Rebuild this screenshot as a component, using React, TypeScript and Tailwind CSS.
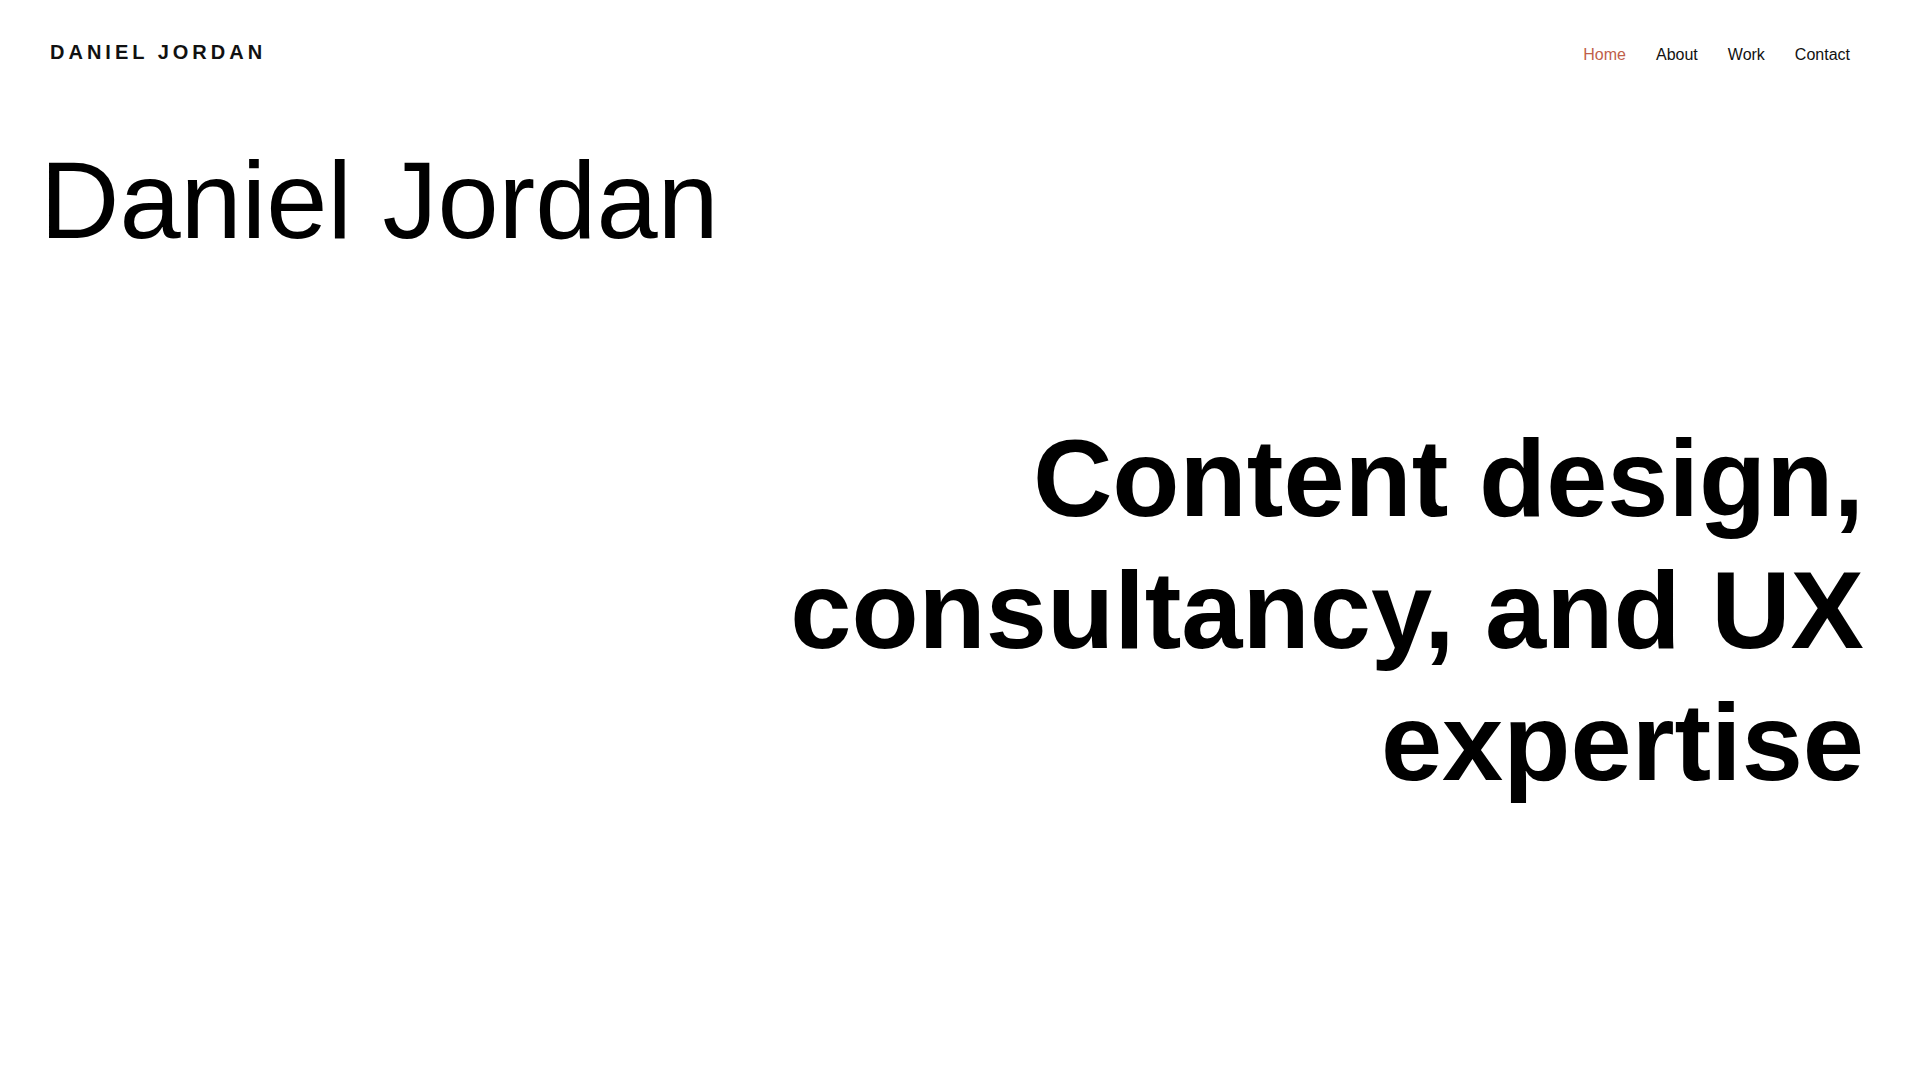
export default function App() {
  const links = ["Home", "About", "Work", "Contact"];

  return (
    <div className="min-h-[4480px] bg-white text-black font-['Liberation_Sans',Arial,sans-serif]">
      {/* header */}
      <header className="flex items-start justify-between pl-[50px] pr-[70px] pt-[38px]">
        <a href="#" className="text-[20px] leading-[28px] font-bold tracking-[0.2em] text-[#111]">
          DANIEL JORDAN
        </a>
        <nav className="flex gap-[30px] pt-[5px] text-[16px] leading-[24px]">
          {links.map((l, i) => (
            <a key={l} href="#" className={i === 0 ? "text-[#bf5f4b]" : "text-[#111]"}>
              {l}
            </a>
          ))}
        </nav>
      </header>

      {/* hero */}
      <main className="pl-[40px] pr-[56px]">
        <h1 className="mt-[78px] text-[110px] leading-none font-normal">Daniel Jordan</h1>
        <p className="mt-[157px] ml-auto w-[1150px] text-right text-[110px] leading-[132px] font-bold">
          Content design, consultancy, and UX expertise
        </p>
      </main>
    </div>
  );
}
